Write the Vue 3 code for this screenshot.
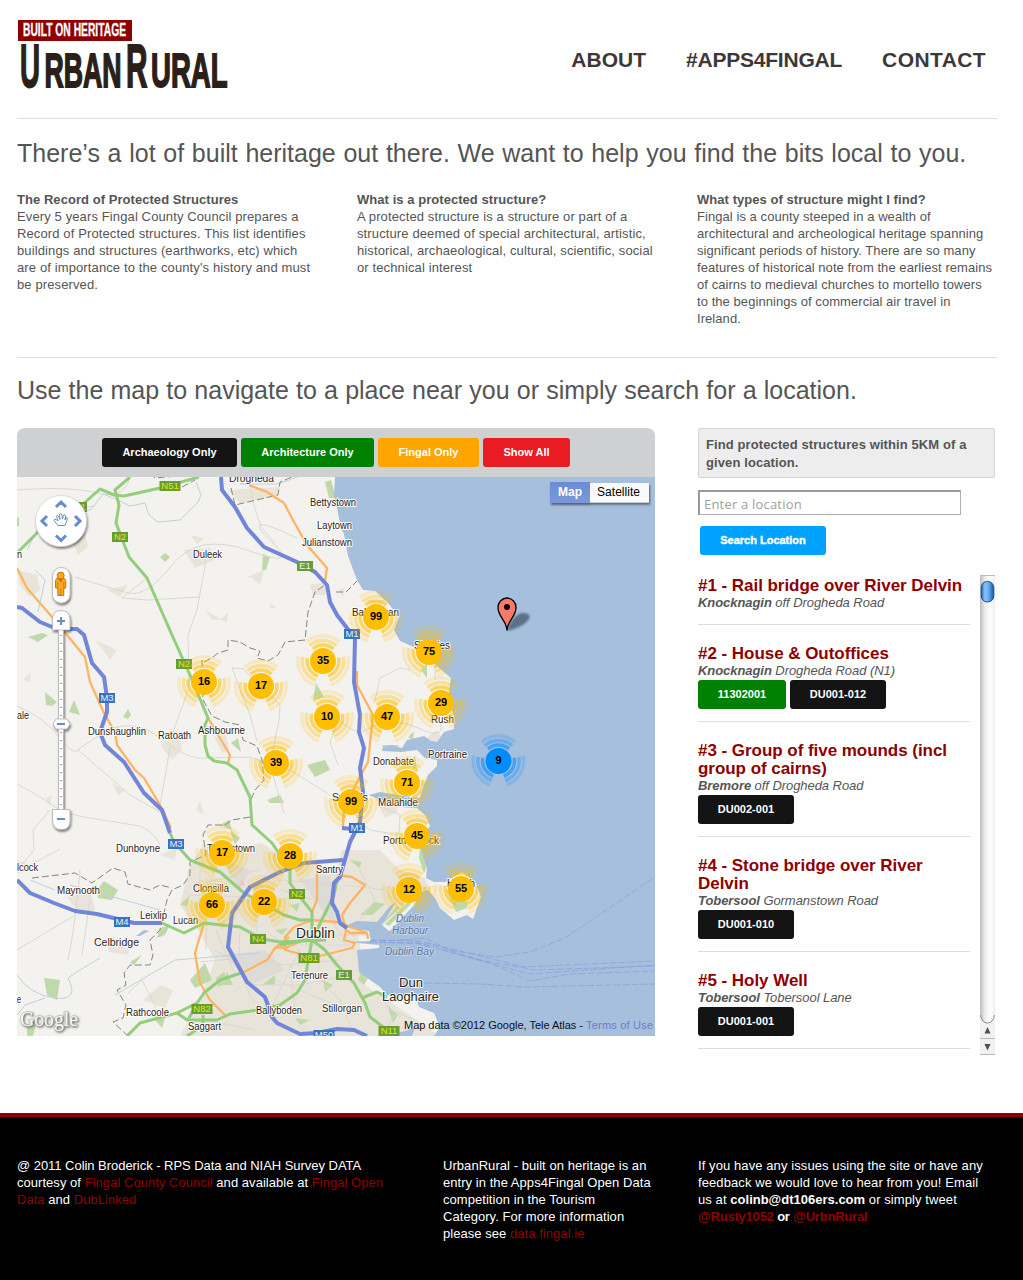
<script setup>
const nav = [['About', 'about'], ['#Apps4Fingal', 'apps'], ['Contact', 'contact']]

const columns = [
  {
    title: 'The Record of Protected Structures',
    lines: [
      'Every 5 years Fingal County Council prepares a',
      'Record of Protected structures. This list identifies',
      'buildings and structures (earthworks, etc) which',
      "are of importance to the county's history and must",
      'be preserved.',
    ],
  },
  {
    title: 'What is a protected structure?',
    lines: [
      'A protected structure is a structure or part of a',
      'structure deemed of special architectural, artistic,',
      'historical, archaeological, cultural, scientific, social',
      'or technical interest',
    ],
  },
  {
    title: 'What types of structure might I find?',
    lines: [
      'Fingal is a county steeped in a wealth of',
      'architectural and archeological heritage spanning',
      'significant periods of history. There are so many',
      'features of historical note from the earliest remains',
      'of cairns to medieval churches to mortello towers',
      'to the beginnings of commercial air travel in',
      'Ireland.',
    ],
  },
]

const filters = [
  { label: 'Archaeology Only', kind: 'black', w: 135 },
  { label: 'Architecture Only', kind: 'green', w: 133 },
  { label: 'Fingal Only', kind: 'orange', w: 101 },
  { label: 'Show All', kind: 'red', w: 87 },
]

const results = [
  { title: ['#1 - Rail bridge over River Delvin'], place: 'Knocknagin', where: 'off Drogheda Road', tags: [] },
  {
    title: ['#2 - House & Outoffices'],
    place: 'Knocknagin',
    where: 'Drogheda Road (N1)',
    tags: [{ t: '11302001', kind: 'green', w: 88 }, { t: 'DU001-012', kind: 'black', w: 96 }],
  },
  {
    title: ['#3 - Group of five mounds (incl', 'group of cairns)'],
    place: 'Bremore',
    where: 'off Drogheda Road',
    tags: [{ t: 'DU002-001', kind: 'black', w: 96 }],
  },
  {
    title: ['#4 - Stone bridge over River', 'Delvin'],
    place: 'Tobersool',
    where: 'Gormanstown Road',
    tags: [{ t: 'DU001-010', kind: 'black', w: 96 }],
  },
  {
    title: ['#5 - Holy Well'],
    place: 'Tobersool',
    where: 'Tobersool Lane',
    tags: [{ t: 'DU001-001', kind: 'black', w: 96 }],
  },
]

const clusters = [
  [376, 617, 99], [429, 652, 75], [323, 661, 35], [204, 682, 16], [261, 686, 17],
  [441, 703, 29], [327, 717, 10], [387, 717, 47], [276, 763, 39], [498.5, 761, 9],
  [407, 783, 71], [351, 802, 99], [417, 836, 45], [222, 853, 17], [290, 856, 28],
  [409, 890, 12], [461, 889, 55], [212, 905, 66], [264, 902, 22],
]

// label, left x, baseline y, width, font size
const places = [
  ['Drogheda', 229, 482, 45, 10], ['Bettystown', 310, 506, 46, 10], ['Laytown', 317, 529, 35, 10],
  ['Julianstown', 302, 546, 50, 10], ['Duleek', 193, 558, 29, 10], ['Balbriggan', 352, 616, 47, 10],
  ['Skerries', 414, 649, 36, 10], ['Rush', 431, 723, 23, 10], ['Portraine', 428, 758, 39, 10],
  ['Donabate', 373, 765, 41, 10], ['Malahide', 378, 806, 40, 10], ['Swords', 332, 801, 36, 10],
  ['Portmarnock', 383, 844, 56, 10], ['Dunshaughlin', 88, 735, 58, 10], ['Ratoath', 158, 739, 33, 10],
  ['Ashbourne', 198, 734, 47, 10], ['Dunboyne', 116, 852, 44, 10], ['Tyrrelstown', 207, 852, 48, 10],
  ['lcock', 17, 871, 21, 10], ['ale', 17, 719, 12, 10], ['n', 17, 558, 5, 10], ['e', 17, 1003, 4, 10],
  ['Maynooth', 57, 894, 43, 10], ['Clonsilla', 193, 892, 36, 10], ['Leixlip', 140, 919, 27, 10],
  ['Lucan', 173, 924, 25, 10], ['Celbridge', 94, 946, 45, 10], ['Santry', 316, 873, 27, 10],
  ['Terenure', 291, 979, 37, 10], ['Rathcoole', 126, 1016, 43, 10], ['Saggart', 188, 1030, 33, 10],
  ['Ballyboden', 256, 1014, 46, 10], ['Stillorgan', 322, 1012, 40, 10], ['Howth', 447, 887, 28, 10],
  ['Dublin', 296, 938, 39, 14], ['Dun', 399, 987, 24, 13], ['Laoghaire', 382, 1001, 57, 13],
]

const waters = [
  ['Dublin', 396, 922, 28], ['Harbour', 392, 934, 36], ['Dublin Bay', 385, 955, 49],
]

// text, centre x, top y, width, kind
const shields = [
  ['N51', 170, 481, 21, 'n'], ['N51', 77, 502, 20, 'n'], ['N2', 120, 532, 16, 'n'], ['E1', 305, 561, 16, 'e'],
  ['M1', 352, 629, 16, 'm'], ['N2', 184, 659, 16, 'n'], ['M3', 107, 693, 16, 'm'], ['M1', 357, 823, 16, 'm'],
  ['M3', 176, 839, 16, 'm'], ['N2', 297, 889, 16, 'n'], ['M4', 122, 917, 16, 'm'], ['N4', 258, 934, 16, 'n'],
  ['N81', 309, 953, 21, 'n'], ['E1', 344, 970, 16, 'e'], ['N82', 202, 1004, 21, 'n'], ['M50', 324, 1030, 21, 'm'],
  ['N11', 389, 1026, 21, 'n'],
]

const coast =
  'M335 477L334 495 337 508 341 528 344 534 348 556 357 580 363 590 375 591 388 603 399 617 394 630 400 641 416 648 430 640 438 648 432 660 439 668 451 678 449 692 446 700 454 715 454 729 444 732 437 742 431 741 424 736 407 740 402 748 383 747 382 751 401 752 417 750 425 758 437 760 437 766 428 775 424 785 420 798 404 796 380 792 369 795 380 800 400 802 401 807 417 808 426 816 430 826 422 838 421 850 427 868 426 878 434 882 445 882 462 872 476 883 481 897 473 919 467 915 454 920 440 908 435 898 428 890 417 893 415 903 389 931 382 925 396 902 390 906 377 922 357 921 343 927 369 931 371 941 347 942 379 945 379 948 357 950 359 972 380 987 387 995 398 997 414 993 419 1007 434 1013 440 1027 434 1036H655V477Z'

const lanes = [
  'M17 490Q70 486 97 493T130 477', 'M55 500Q80 510 95 506', 'M75 577Q110 588 128 593T172 565T250 551T270 540T297 538',
  'M250 485Q254 510 262 528L275 543', 'M206 560L197 610L188 635 189 690', 'M147 578L122 598L148 600 200 597',
  'M17 706Q45 718 60 738T80 748L100 735Q130 715 160 738T205 758L250 757L290 770L338 800',
  'M17 784Q40 796 52 805T90 818L140 826Q155 833 160 845', 'M77 749L130 795L162 813', 'M160 805L168 760 170 745',
  'M172 735L181 710 188 690', 'M232 668L250 715 257 741', 'M232 668L244 669L254 680M271 696L280 705 279 720 270 765L284 813',
  'M80 870Q76 920 68 960', 'M17 950L50 930 74 916', 'M60 849L17 872', 'M50 810L33 830 34 850 18 870',
  'M90 900L82 955', 'M128 993L142 980 155 1005 157 1018', 'M200 870L200 920 206 925', 'M216 930L235 975', 'M240 930Q235 980 260 1010',
  'M337 715Q340 725 360 733', 'M337 723L330 742 338 765', 'M410 670L400 668 380 678 375 700', 'M360 733Q390 715 418 728T440 722',
  'M435 660V680', 'M380 806L400 815 399 835 370 830 360 822', 'M270 935L300 950 270 1010', 'M300 960L340 1000 352 1030',
  'M250 985L300 985 350 975', 'M195 885L260 870M190 895L280 898M208 882L206 950M254 890L257 935', 'M280 880L338 885M280 890L330 905',
  'M345 885L385 890 395 900M360 870L375 900 360 920', 'M260 960L285 965 340 960M275 980L360 1015M290 965L295 1010',
  'M380 995L390 1010 415 1020M395 1015L385 1030', 'M215 950L240 965M200 962L250 957M205 1020L255 1030',
  'M300 935H370M300 945H350M320 925L355 950M320 905L345 940M295 925L320 965',
]
const streams = [
  'M77 510L90 510 97 502 103 494 118 500 130 506 145 503 149 515 158 522 180 520 198 502 201 495 196 482',
  'M249 483L240 484 278 484 300 476', 'M17 975Q30 995 55 998T68 978L80 970 100 958', 'M37 530L27 550', 'M17 1015L25 1005 45 998',
  'M115 995L175 960 260 953', 'M35 570L45 580 38 612', 'M30 880L55 890M70 885L160 910',
]
const parks = [
  'M325 482L331 480 336 498 329 498Z', 'M263 554L270 557 266 570 262 570Z', 'M160 557L165 553 170 557 165 562Z',
  'M28 637L42 633 48 635 38 642Z', 'M69 712L74 700 80 715Z', 'M123 717L128 709 131 715 128 719Z', 'M307 765L325 760 330 770 315 777Z',
  'M231 743L238 738 241 752Z', 'M267 800L280 795 284 803 270 803Z', 'M97 890L104 881 118 890 112 900 98 898Z',
  'M44 978L60 980 57 1000 47 995Z', 'M27 1025L38 1018 33 1036 27 1036Z', 'M180 905L190 895 187 906Z', 'M157 938L160 928 170 925 165 935Z',
  'M130 962L142 955 134 965Z', 'M190 980L205 963 212 980 195 988Z', 'M216 978L224 972 228 982 218 987Z', 'M275 930L288 928 282 935Z',
  'M313 700L316 683 324 697Z', 'M421 670L427 663 427 678Z', 'M408 737L414 731 413 740Z', 'M415 755L417 770 410 765Z',
  'M382 745L398 745 400 750 385 751Z', 'M420 846L427 865 424 873 419 858Z', 'M383 922L397 906 400 908 386 925Z', 'M446 890L466 893 467 908 456 912Z',
  'M350 860L362 862 359 868Z', 'M360 915L375 902 385 904 372 915Z', 'M222 985L227 972 233 985Z', 'M362 970L368 978 364 985 358 980Z',
  'M323 980L333 985 325 992Z', 'M262 985L275 975 275 985ZM290 905L300 903 297 912Z', 'M155 1020L165 1018 162 1028Z', 'M387 1005L398 1015 393 1023Z',
  'M230 830L240 838 235 845ZM220 825L229 820 232 830Z', 'M45 692L57 702 52 706 46 705Z', 'M17 517L19 518V526H17Z', 'M295 1018L310 1020 300 1025Z',
]
const towns = [
  'M228 490L280 487 278 495 240 503Z', 'M17 570L37 575 40 590 30 597 20 585Z', 'M73 543L85 532 88 547 78 555Z', 'M247 577L264 570 260 585 253 578Z',
  'M95 640L117 650 110 660 103 650Z', 'M160 745L180 735 182 750 172 760Z', 'M214 737L226 735 229 750 222 753Z', 'M107 590L128 585 120 597Z',
  'M184 550L210 548 215 560 195 568Z', 'M310 585L325 582 326 595 313 595Z', 'M67 897L90 890 95 910 80 914Z', 'M110 937L130 940 128 955 108 952Z',
  'M143 1000L160 985 173 990 165 1008Z', 'M160 855L177 848 175 860Z', 'M425 739L437 730 443 740 432 760 425 750Z', 'M375 797L392 795 398 812 385 818Z',
  'M17 860L30 865 24 872 17 873Z', 'M339 590L345 587 343 598Z', 'M367 600L385 600 375 612Z', 'M112 783L125 790 118 795Z', 'M196 810L200 800 204 815Z',
  'M205 610L222 620 213 620ZM190 535L205 538 197 544ZM270 603L277 608 270 608ZM220 620L228 612 227 622Z', 'M23 680L31 672 30 682ZM46 798L52 795 50 806Z',
]
const borders = [
  'M204 662L213 657 218 653 228 650 228 640 240 642 250 648 260 651 257 658 268 661 278 655 285 642 305 640 308 612 315 592 325 585',
  'M202 660L203 700 212 716 225 722 240 725 243 740 257 746 262 760 264 780 255 790 250 802', 'M250 817L232 820 225 825 208 825 203 835 206 855 190 862 190 875 183 885 172 890 167 900 160 930 150 940 153 955 150 965 130 965 124 973 126 985 117 990 126 1005 123 1018 113 1022 128 1036',
  'M32 878L75 873 92 883 113 868 125 872 128 884 150 890 160 885 172 888', 'M231 488L235 505 278 495 280 482 292 477', 'M336 592L346 592 357 581', 'M150 473L155 478 200 474', 'M182 487L195 480',
]
const orange = [
  'M249 485L267 492 284 503 294 522 307 545 327 568 325 582', 'M17 568L27 588 52 617 67 635 85 657 90 682 104 713 115 732 117 745 135 770 144 778 160 805 171 828',
  'M208 718L230 755 228 763', 'M357 671L357 685 373 715 368 762 357 782 344 808 343 827', 'M204 923L195 953 200 983 210 1000 227 1017',
  'M244 972L267 960 275 948 289 937', 'M317 863L317 900 312 912', 'M337 875L352 877 365 885 350 903 342 915 346 930 344 940 355 943 352 948 320 956 304 955 285 950 285 937 294 927 312 920 337 922 367 933',
  'M275 947L285 948 300 942', 'M347 930L350 933 367 933 368 939',
]
const green = [
  'M17 553L38 532 82 505 100 489 114 495 124 496 160 488 199 477', 'M130 477L115 490 119 505 116 523 129 557 147 578 172 635 190 675 208 718 205 725 205 745 208 756 214 761 227 763 237 770 250 797 252 825 272 843 290 870 290 883 300 897 312 912 312 940 307 967 305 980 297 993 280 1005 257 1010 230 1014 217 1020 187 1020 177 1013',
  'M170 833L174 842 190 860 220 872 244 893 284 915 300 920 312 920', 'M162 923L184 933 204 923 240 927 262 939 280 942 326 940', 'M127 1036L140 1023 177 1013 197 1003 204 993 220 980 244 972',
  'M312 940L334 895 337 880', 'M312 940L325 950 337 965 354 983 365 1003 370 1017 387 1030', 'M362 998L377 992 387 997', 'M188 1020L196 1005M187 1036L196 1030M203 1015V1025',
  'M280 945L326 936',
]
const blue = [
  'M221 477L222 490 235 507 247 528 264 547 297 562 315 572 327 585 330 602 337 615 347 628 355 638 354 682 360 715 359 732 364 748 360 768 363 792 360 822 350 842 340 877 334 883 332 903 337 912 340 923 347 928',
  'M342 828L353 829', 'M17 607L22 608 40 622 57 629 77 629 84 635 92 663 104 677 107 698 107 712 100 732 105 745 124 762 144 793 162 810 170 833', 'M343 860L304 863 280 872 250 887 232 913 228 947 247 982 265 997 272 1017 277 1023 300 1034 317 1033 337 1029 354 1030 367 1036',
  'M17 880L30 893 54 903 75 911 97 914 134 923 162 923',
]
const ferries = [
  'M370 940L420 941 480 956 524 967 655 961', 'M370 941L410 940 470 958 530 974 655 965', 'M370 942L430 944 490 963 530 981 570 974 655 971', 'M380 942L415 943 480 960 535 970 655 966',
  'M400 940L425 938 450 950 495 957 530 952 565 938 655 877', 'M425 983L480 984 525 987 655 984',
]
</script>

<template>
  <div class="page">
    <div class="wrap">
      <header class="head">
        <svg class="logo" width="214" height="72" viewBox="17 19 214 72">
          <g class="wordmark">
            <text x="20" y="87" font-size="60.500" textLength="20" lengthAdjust="spacingAndGlyphs">U</text>
            <text x="44.500" y="87" font-size="48.500" textLength="77" lengthAdjust="spacingAndGlyphs">RBAN</text>
            <text x="126" y="87" font-size="60.500" textLength="21.500" lengthAdjust="spacingAndGlyphs">R</text>
            <text x="151" y="87" font-size="48.500" textLength="76.500" lengthAdjust="spacingAndGlyphs">URAL</text>
          </g>
          <rect x="18" y="20" width="114" height="21" fill="#8f0000" />
          <text x="23" y="36" font-size="17.500" fill="#fff" stroke="#fff" stroke-width=".3" textLength="103" lengthAdjust="spacingAndGlyphs">BUILT ON HERITAGE</text>
        </svg>
        <nav class="nav">
          <a v-for="n in nav" :key="n[1]" :class="n[1]">{{ n[0] }}</a>
        </nav>
      </header>

      <section class="intro">
        <h2>There’s a lot of built heritage out there. We want to help you find the bits local to you.</h2>
        <div class="columns">
          <div v-for="c in columns" :key="c.title" class="column">
            <h3>{{ c.title }}</h3>
            <p><template v-for="l in c.lines" :key="l">{{ l }}<br /></template></p>
          </div>
        </div>
      </section>

      <section class="finder">
        <h2 class="second">Use the map to navigate to a place near you or simply search for a location.</h2>
        <div class="split">
          <div class="mapbox">
            <div class="toolbar">
              <button v-for="f in filters" :key="f.label" class="btn" :class="f.kind" :style="{ width: f.w + 'px' }">{{ f.label }}</button>
            </div>
            <svg class="map" width="638" height="559" viewBox="17 477 638 559">
              <defs>
                <linearGradient id="selected" x1="0" y1="0" x2="0" y2="1">
                  <stop offset="0" stop-color="#6b8bd2" /><stop offset="1" stop-color="#7b98dd" />
                </linearGradient>
                <filter id="shade" x="-30%" y="-30%" width="170%" height="170%">
                  <feDropShadow dx="1" dy="2" stdDeviation="1" flood-opacity=".5" />
                </filter>
                <filter id="soft"><feGaussianBlur stdDeviation="1" /></filter>
              </defs>
              <rect x="17" y="477" width="638" height="559" fill="#f4f2ee" />
              <path d="M180 905L188 870 203 845 225 850 262 843 290 862 337 868 342 850 380 850 400 870 425 878 440 915 380 925 358 930 365 985 440 1036H180L200 1000 215 960 198 930Z" fill="#e9e4da" />
              <path d="M337 930L300 880 330 875ZM222 860L250 870 240 890ZM225 955L265 950 285 970 250 985Z" fill="#dedbd6" />
              <path v-for="d in towns" :key="d" :d="d" fill="#e9e4d9" />
              <path d="M238 886L243 878 245 886Z" fill="#ecc9ca" />
              <path v-for="d in parks" :key="d" :d="d" fill="#bfd9a8" />
              <g fill="none" stroke-linejoin="round">
                <path v-for="d in lanes" :key="d" :d="d" stroke="#dcd7d0" stroke-width="1" />
                <path v-for="d in streams" :key="d" :d="d" stroke="#bed0e4" stroke-width="1" />
              </g>
              <path :d="coast" fill="#a5bfdd" />
              <path d="M385 747L402 748 390 745ZM398 1033L415 1028 412 1036 400 1036ZM136 936L144 930 149 931 140 936Z" fill="#a5bfdd" />
              <path d="M384 923L413 897 416 903 390 931Z" fill="#f4f2ee" />
              <path d="M385 924L409 901 411 904 389 926Z" fill="#bfd9a8" />
              <g fill="none" stroke-linejoin="round">
                <path v-for="d in ferries" :key="d" :d="d" stroke="#8f9fdb" stroke-width="1" stroke-dasharray="7 2" opacity=".75" />
                <path v-for="d in borders" :key="d" :d="d" stroke="#87857f" stroke-width="1" stroke-dasharray="7 3" />
                <path v-for="d in orange" :key="d" :d="d" stroke="#ffb461" stroke-width="2.300" />
                <path v-for="d in green" :key="d" :d="d" stroke="#92ce7b" stroke-width="3" />
                <path v-for="d in blue" :key="d" :d="d" stroke="#7186d8" stroke-width="4" />
              </g>
              <g v-for="(s, i) in shields" :key="'s' + i">
                <rect :x="s[1] - s[3] / 2" :y="s[2]" :width="s[3]" height="10" :fill="s[4] === 'm' ? '#3572c5' : '#669c3b'" />
                <text :x="s[1]" :y="s[2] + 8.300" font-size="9.500" text-anchor="middle" :fill="s[4] === 'n' ? '#e7e600' : '#eef3e8'">{{ s[0] }}</text>
              </g>
              <g class="places">
                <text v-for="(p, i) in places" :key="'p' + i" :x="p[1]" :y="p[2]" :font-size="p[4]" :textLength="p[3]" lengthAdjust="spacingAndGlyphs">{{ p[0] }}</text>
              </g>
              <g class="waters">
                <text v-for="w in waters" :key="w[0]" :x="w[1]" :y="w[2]" font-size="10" :textLength="w[3]" lengthAdjust="spacingAndGlyphs">{{ w[0] }}</text>
              </g>

              <g v-for="(c, i) in clusters" :key="'c' + i" :transform="`translate(${c[0]} ${c[1]})`" :class="c[2] === 9 ? 'cold' : 'warm'">
                <g fill="none" stroke-width="3.500">
                  <circle r="15.900" pathLength="360" stroke-dasharray="82 38" transform="rotate(-131)" opacity=".58" />
                  <circle r="20.600" pathLength="360" stroke-dasharray="82 38" transform="rotate(-131)" opacity=".36" />
                  <circle r="25.200" pathLength="360" stroke-dasharray="82 38" transform="rotate(-131)" opacity=".18" />
                </g>
                <circle r="13" class="core" />
                <text y="3" font-size="11" font-weight="bold" text-anchor="middle">{{ c[2] }}</text>
              </g>

              <path d="M507 631Q511 617 521 613Q532 612 529 619Q524 627 507 631Z" fill="#36475d" opacity=".65" filter="url(#soft)" />
              <path d="M507 630.500C506.500 620 498 617 498 607.500A9 9.500 0 0 1 516 607.500C516 617 507.500 620 507 630.500Z" fill="#fe776b" stroke="#000" stroke-width="1.300" />
              <circle cx="507" cy="607" r="3" />

              <g filter="url(#shade)"><circle cx="61" cy="521" r="25.500" fill="#fff" stroke="#ccc" stroke-width=".6" /></g>
              <path d="M56 507L61 502 66 507M56 535.500L61 540.500 66 535.500M47 516L42 521 47 526M75 516L80 521 75 526" fill="none" stroke="#658bd0" stroke-width="3" />
              <path d="M58 525.500L54 520.500Q54 518.500 56 519.500L58 521 56.500 516Q57.500 514 59 517L60 519.500 59.500 514.500Q61 513 62 515L62.500 519 63.500 515Q65 514 65.500 516L65 520 66 517.500Q68 517 67 520L65 525.500Z" fill="#fff" stroke="#4777ba" stroke-width=".8" />
              <g filter="url(#shade)" stroke="#b0b0b0" stroke-width=".8">
                <rect x="52.500" y="567.500" width="17.500" height="35.500" rx="8.500" fill="#fff" />
                <rect x="58.500" y="629" width="5" height="182" fill="#fff" />
                <path d="M52.500 630V619Q52.500 610.500 61 610.500T70 619V630Z" fill="#fff" />
                <path d="M52.500 809.500V820Q52.500 829.500 61.500 829.500T70 820V809.500Z" fill="#fff" />
                <path d="M56 719H67L70 724 67 729H56L53 724Z" fill="#fff" />
              </g>
              <path d="M61 635V717M61 732V808" stroke="#aaa" stroke-width="2.500" stroke-dasharray="1 7" />
              <path d="M57 621H65M61 617V625M57 724H65M57 819H65" stroke="#658bd0" stroke-width="2" />
              <path d="M56.500 578.500H64.500L65.800 580.500V588L63.800 588.500V595.500H57.800V588.500L55.500 588V580.500Z" fill="#faa719" stroke="#bf7010" stroke-width=".9" />
              <circle cx="60.700" cy="575.500" r="3.500" fill="#faa719" stroke="#bf7010" stroke-width=".9" />
              <path d="M58.500 579L60.700 582.500 63 579Z" fill="#e35b18" />
              <path d="M60.700 589V595M57.800 582V588M63.800 582V588" stroke="#bf7010" stroke-width=".7" />

              <g filter="url(#shade)">
                <rect x="550" y="482" width="40" height="21" fill="url(#selected)" />
                <rect x="590" y="483" width="59" height="19.500" fill="#fafafa" />
              </g>
              <text x="558" y="496" font-size="12" font-weight="bold" fill="#fff" textLength="24">Map</text>
              <text x="597" y="496" font-size="12" textLength="43">Satellite</text>

              <text class="google" x="20" y="1026" font-size="22" textLength="58" lengthAdjust="spacingAndGlyphs">Google</text>
              <text x="404" y="1029" font-size="11" fill="#111" textLength="179">Map data ©2012 Google, Tele Atlas -</text>
              <text x="586" y="1029" font-size="11" fill="#7777cc" textLength="67">Terms of Use</text>
            </svg>
          </div>

          <aside class="side">
            <div class="hint">Find protected structures within 5KM of a<br />given location.</div>
            <div class="field">Enter a location</div>
            <button class="btn sky">Search Location</button>
            <div class="scroller">
              <div class="results">
                <article v-for="(r, i) in results" :key="i" :class="{ bare: !r.tags.length }">
                  <h4><template v-for="t in r.title" :key="t">{{ t }}<br /></template></h4>
                  <p class="addr"><b>{{ r.place }}</b> {{ r.where }}</p>
                  <div v-if="r.tags.length" class="tags">
                    <span v-for="t in r.tags" :key="t.t" class="btn" :class="t.kind" :style="{ width: t.w + 'px' }">{{ t.t }}</span>
                  </div>
                </article>
              </div>
              <svg class="bar" width="15" height="480" viewBox="0 0 15 480">
                <defs>
                  <linearGradient id="track"><stop offset="0" stop-color="#bdbdbd" /><stop offset=".35" stop-color="#eee" /><stop offset=".7" stop-color="#fff" /><stop offset="1" stop-color="#ededed" /></linearGradient>
                  <linearGradient id="thumb"><stop offset="0" stop-color="#245faf" /><stop offset=".3" stop-color="#8fc4f5" /><stop offset=".6" stop-color="#62acf0" /><stop offset="1" stop-color="#1c50a2" /></linearGradient>
                </defs>
                <rect width="15" height="480" fill="#f1f1f1" />
                <path d="M0 0H15V440Q14 448 7.500 448T0 440Z" fill="url(#track)" />
                <path d="M.5 440Q2 448 7.500 448T14.500 440" fill="none" stroke="#8c8c8c" />
                <path d="M0 .5H15M0 463.500H15M0 479.500H15" stroke="#bbb" />
                <rect x="1.200" y="6.500" width="12.600" height="20.500" rx="6" fill="url(#thumb)" stroke="#1d4f9e" />
                <path d="M4.500 458.500H10.500L7.500 452ZM4.500 469H10.500L7.500 475.500Z" fill="#505050" />
              </svg>
            </div>
          </aside>
        </div>
      </section>
    </div>

    <footer class="foot">
      <div class="f1">@ 2011 Colin Broderick - RPS Data and NIAH Survey DATA<br /><span class="wide">courtesy of <a>Fingal County Council</a> and available at <a>Fingal Open</a></span><br /><span class="wide"><a>Data</a> and <a>DubLinked</a></span></div>
      <div class="f2">UrbanRural - built on heritage is an<br />entry in the Apps4Fingal Open Data<br />competition in the Tourism<br />Category. For more information<br />please see <a>data.fingal.ie</a></div>
      <div class="f3">If you have any issues using the site or have any<br />feedback we would love to hear from you! Email<br />us at <b>colinb@dt106ers.com</b> or simply tweet<br /><b class="handles"><a>@Rusty1052</a> or <a>@UrbnRural</a></b></div>
    </footer>
  </div>
</template>

<style>
body { margin: 0; background: #fff; }
</style>

<style scoped>
.page {
  width: 1023px;
  height: 1280px;
  overflow: hidden;
  display: flex;
  flex-direction: column;
  font: 13px/17px "Liberation Sans", Arial, sans-serif;
  color: #555;
  white-space: nowrap;
}
.wrap { width: 980px; height: 1113px; margin-left: 17px; }
h2, h3, h4, p { margin: 0; }
.head {
  display: flex;
  justify-content: space-between;
  height: 99px;
  padding-top: 19px;
  border-bottom: 1px solid #ddd;
}
.logo { display: block; overflow: visible; font-family: "Liberation Sans Narrow", "Liberation Sans", sans-serif; font-weight: bold; }
.wordmark { fill: #2b1f19; stroke: #2b1f19; stroke-width: 1.8px; }
.nav {
  display: flex;
  gap: 40px;
  margin: 29px 11px 0 0;
  font-size: 21px;
  line-height: 24px;
  font-weight: bold;
  color: #3d3838;
  text-transform: uppercase;
}
.apps { letter-spacing: -.22px; }
.contact { letter-spacing: .4px; }
.intro { height: 238px; border-bottom: 1px solid #ddd; }
h2 { height: 72px; font-size: 25px; line-height: 68px; font-weight: normal; word-spacing: .75px; }
h2.second { height: 70px; line-height: 64px; word-spacing: .22px; }
.columns { display: flex; gap: 44px; }
.column { width: 296px; }
.column p { letter-spacing: .12px; }
.column:last-child p { letter-spacing: .06px; }
h3 { font-size: 13px; line-height: 17px; letter-spacing: .05px; }
.split { display: flex; gap: 43px; }
.mapbox { width: 638px; height: 608px; border-radius: 8px 8px 0 0; overflow: hidden; }
.toolbar {
  display: flex;
  justify-content: center;
  gap: 4px;
  height: 39px;
  padding-top: 10px;
  background: #cfd0d1;
}
.map { display: block; font-family: "Liberation Sans", Arial, sans-serif; }
.places text { fill: #2a2320; stroke: #fff; stroke-width: 2px; stroke-opacity: .85; paint-order: stroke; }
.waters text { fill: #5c7594; font-style: italic; stroke: #c9d8ea; stroke-width: 1.5px; paint-order: stroke; }
.warm { stroke: #ffbf00; }
.cold { stroke: #008cff; }
.warm .core { fill: #ffbf00; }
.cold .core { fill: #008cff; }
.core, .warm text, .cold text { stroke: none; }
.google {
  font-family: "Liberation Serif", serif;
  fill: #f6f6f4;
  stroke: #b3b3ae;
  stroke-width: 1px;
  paint-order: stroke;
  filter: drop-shadow(1px 1px 1px #666);
}
.btn {
  display: block;
  box-sizing: border-box;
  height: 29px;
  padding: 0;
  border: 0;
  border-radius: 3px;
  font: bold 11px/29px "Liberation Sans", Arial, sans-serif;
  color: #fff;
  text-align: center;
}
.black { background: #141414; }
.green { background: #008000; }
.orange { background: #ffa500; }
.red { background: #e91c24; }
.sky { width: 126px; margin: 11px 0 0 2px; background: #00a2ff; -webkit-text-stroke: .4px #fff; }
.side { width: 297px; }
.hint {
  box-sizing: border-box;
  height: 50px;
  padding: 7px 7px 5px;
  border: 1px solid #d5d5d5;
  border-radius: 2px;
  background: #ededed;
  font-weight: bold;
  line-height: 18px;
  letter-spacing: .1px;
}
.field {
  box-sizing: border-box;
  width: 263px;
  height: 25px;
  margin-top: 12px;
  padding-left: 4px;
  border: 1px solid #b0b0b0;
  border-top: 2px solid #999;
  border-left: 2px solid #999;
  font: 13px/25px "Open Sans", sans-serif;
  letter-spacing: .2px;
  color: #a0a0a0;
}
.scroller { display: flex; justify-content: space-between; height: 480px; margin-top: 20px; overflow: hidden; }
.results { width: 272px; }
article { padding: 2px 0 12px; margin-bottom: 18px; border-bottom: 1px solid #ddd; }
article.bare { padding-bottom: 14px; }
h4 { font-size: 17px; line-height: 18px; color: #8f0000; letter-spacing: -.04px; }
.addr { line-height: 15px; font-style: italic; height: 15px; letter-spacing: -.06px; }
.tags { display: flex; gap: 4px; padding-top: 2px; }
.foot {
  box-sizing: border-box;
  height: 167px;
  padding: 40px 17px 0;
  border-top: 4px solid #8f0000;
  background: #000;
  color: #fff;
  display: flex;
}
.foot a { color: #8f0000; }
.f1 { width: 426px; letter-spacing: -.04px; }
.wide { letter-spacing: .04px; }
.f2 { width: 255px; letter-spacing: .05px; }
.f3 { letter-spacing: .09px; }
.f3 b { letter-spacing: 0; }
.f3 .handles { letter-spacing: -.2px; }
</style>
